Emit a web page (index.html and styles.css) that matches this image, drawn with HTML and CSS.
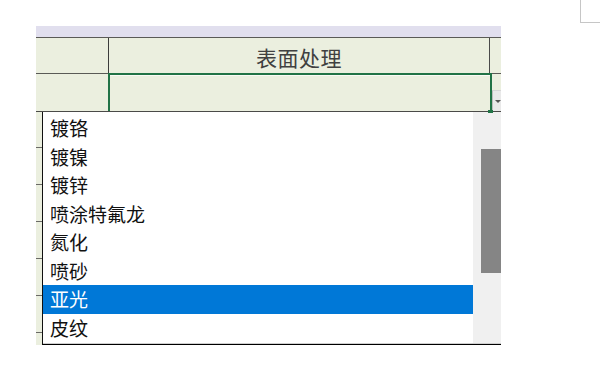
FILE: index.html
```html
<!DOCTYPE html>
<html lang="zh-CN">
<head>
<meta charset="utf-8">
<title>表面处理</title>
<link rel="stylesheet" href="styles.css">
</head>
<body>
<div class="topbar"><div class="corner"></div></div>
<div class="stage">
  <div class="sheet">
    <div class="strip"></div>
    <div class="row row-head">
      <div class="cell cell-a"></div>
      <div class="cell cell-b">表面处理</div>
      <div class="cell cell-c"></div>
    </div>
    <div class="row row-input">
      <div class="cell cell-a2"></div>
      <div class="cell cell-sel"><span class="handle"></span></div>
      <div class="cell cell-c2"><div class="dd-btn"><span class="tri"></span></div></div>
    </div>
    <div class="lower">
      <div class="gutter">
        <div class="gcell"></div><div class="gcell"></div><div class="gcell"></div>
        <div class="gcell"></div><div class="gcell"></div><div class="gcell"></div>
      </div>
      <div class="list">
        <ul class="items">
          <li class="item">镀铬</li>
          <li class="item">镀镍</li>
          <li class="item">镀锌</li>
          <li class="item">喷涂特氟龙</li>
          <li class="item">氮化</li>
          <li class="item">喷砂</li>
          <li class="item active">亚光</li>
          <li class="item">皮纹</li>
        </ul>
        <div class="scroll"><div class="thumb"></div></div>
      </div>
    </div>
  </div>
</div>
</body>
</html>
```
FILE: styles.css
```css
* { box-sizing: border-box; }
html, body { margin: 0; padding: 0; background: #fff; }
body {
  width: 600px; height: 376px; overflow: hidden;
  font-family: "Noto Sans CJK SC", "Noto Sans", sans-serif;
}
.topbar { height: 26px; display: flex; justify-content: flex-end; }
.corner {
  width: 20px; height: 23px;
  border-left: 1px solid #c6c6c6;
  border-bottom: 1px solid #c6c6c6;
}
.stage { padding-left: 36px; }
.sheet { width: 465px; overflow: hidden; }
.strip { height: 11px; background: #e1dfee; }
.row { display: grid; grid-template-columns: 73px 381px 11px; background: #ebefdf; }
.row-head { height: 36px; border-top: 1px solid #5a5a56; }
.cell-a { border-right: 1px solid #3c3c3c; }
.cell-b {
  border-right: 1px solid #4a4a4a;
  text-align: center;
  font-size: 21px; line-height: 38px;
  color: #404040;
  letter-spacing: 0.5px;
}
.row-input {
  height: 39px;
  grid-template-columns: 72px 384px 9px;
  border-top: 1px solid #5a5a56;
  border-bottom: 1px solid #4a4a48;
}
.cell-sel {
  position: relative;
  border: 2px solid #217346;
  border-bottom: none;
  margin-top: -1px;
  box-shadow: inset 0 1px 0 #fafaf5;
}
.handle {
  position: absolute; right: -3px; bottom: -2px;
  width: 5px; height: 3px; background: #217346;
}
.cell-c2 { display: flex; align-items: flex-end; }
.dd-btn {
  width: 100%; height: 21px;
  background: #e9e9e9;
  border-left: 1px solid #bdbdbd;
  border-top: 1px solid #d6d6d6;
  display: flex; align-items: center; justify-content: center;
  padding-left: 2px;
}
.tri {
  width: 0; height: 0;
  border-left: 3px solid transparent;
  border-right: 3px solid transparent;
  border-top: 3px solid #555;
}
.lower { display: flex; height: 233px; }
.gutter { width: 6px; background: #ebefdf; }
.gcell { height: 37px; border-bottom: 1px solid #6a6a66; }
.gcell:first-child { height: 36px; }
.list {
  flex: 1;
  display: flex;
  background: #fff;
  border-left: 1px solid #111;
  border-bottom: 1px solid #000;
  box-shadow: inset 0 -1px 0 #cfcfcf;
}
.items {
  list-style: none; margin: 0; padding: 2px 0 0 0;
  width: 430px;
}
.item {
  height: 28.5px; line-height: 28.5px;
  padding-left: 7px;
  font-size: 19px; color: #111;
}
.item.active { background: #0078d7; color: #fff; }
.scroll {
  flex: 1;
  background: #f0f0f0;
  padding: 37px 0 0 8px;
  margin-bottom: 1px;
}
.thumb { height: 124px; background: #858585; }
```
